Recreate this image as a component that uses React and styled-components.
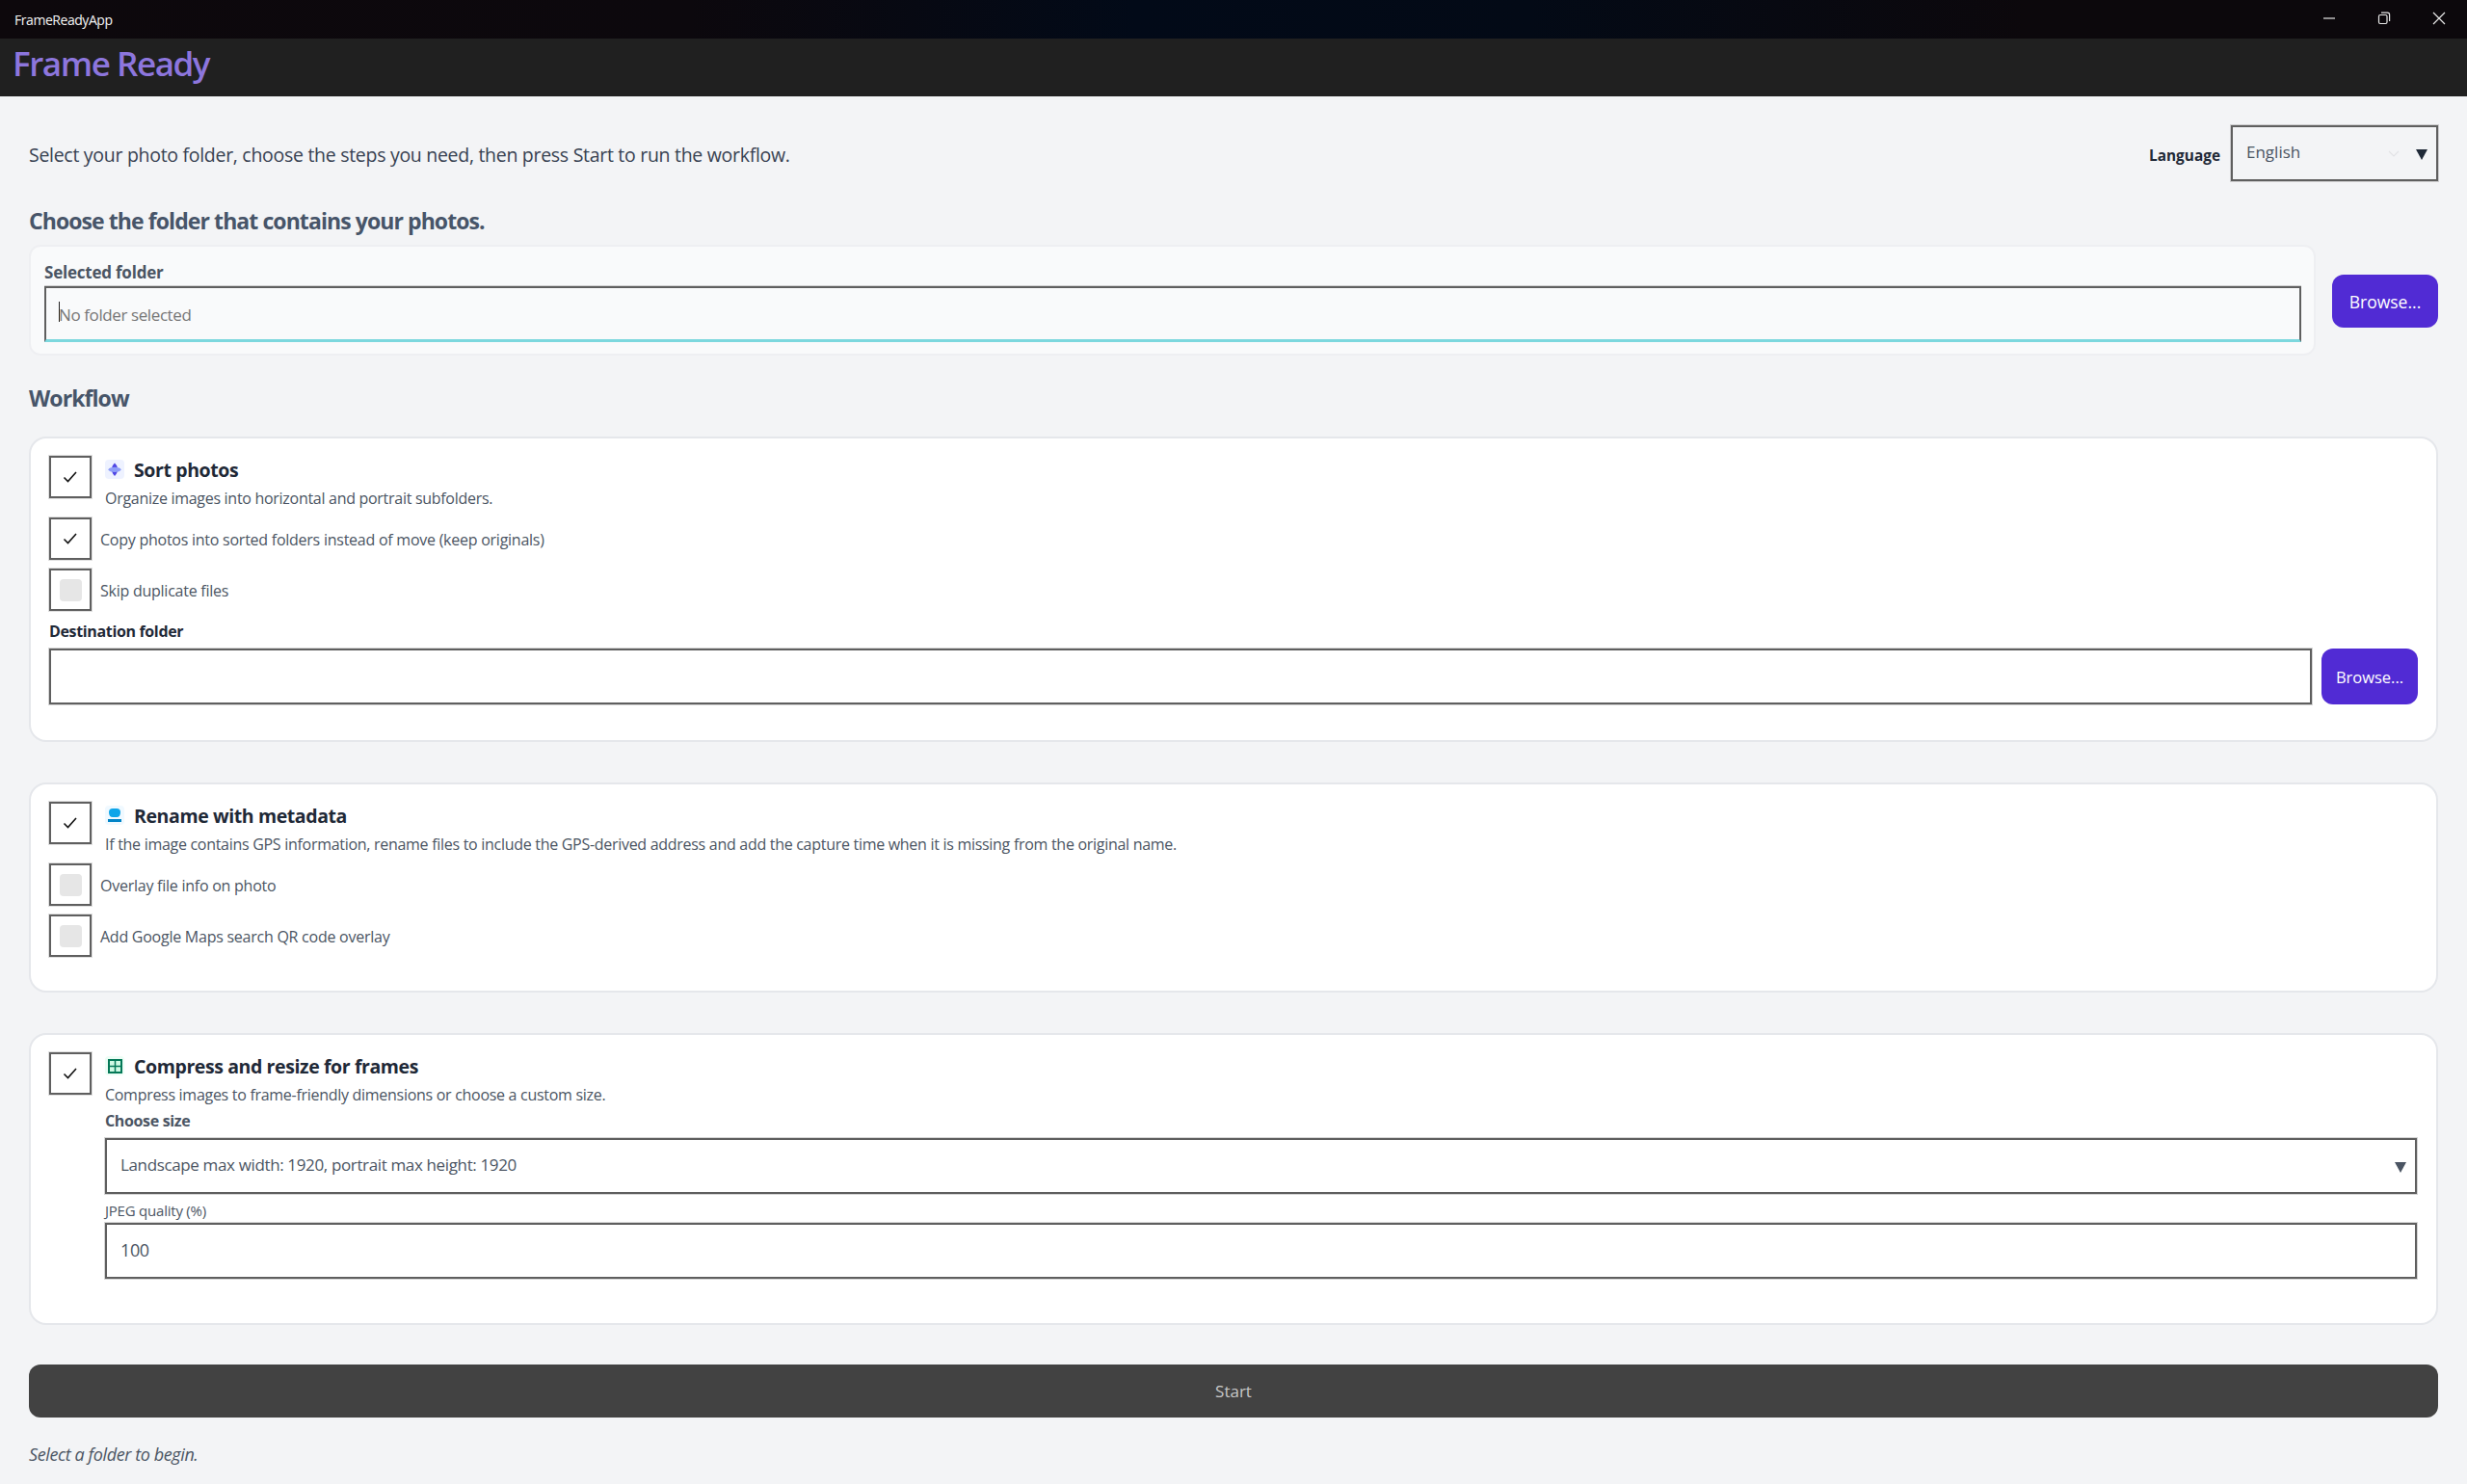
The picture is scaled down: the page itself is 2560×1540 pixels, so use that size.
import styled, { createGlobalStyle } from "styled-components";

const GlobalStyle = createGlobalStyle`
  html, body {
    margin: 0;
    padding: 0;
    background: #f3f4f6;
  }
  * {
    box-sizing: border-box;
  }
`;

const SEGOE = `"Open Sans", "Noto Sans", sans-serif`;

const Page = styled.div`
  width: 2560px;
  height: 1540px;
  display: flex;
  flex-direction: column;
  font-family: ${SEGOE};
  overflow: hidden;
`;

const TitleBar = styled.div`
  height: 40px;
  flex: none;
  display: flex;
  align-items: center;
  justify-content: space-between;
  padding-left: 15px;
  background: linear-gradient(90deg, #0d080c 0%, #0c080d 28%, #020a18 46%, #030a16 62%, #0c080c 82%, #0c080c 100%);
`;

const AppName = styled.span`
  color: #f5f5f5;
  font-size: 14px;
  letter-spacing: -0.45px;
`;

const WindowControls = styled.div`
  display: flex;
  height: 100%;
  align-items: center;
  padding-right: 1px;
`;

const WindowButton = styled.div`
  width: 57px;
  height: 100%;
  display: flex;
  align-items: center;
  justify-content: center;
  margin-top: -2px;
`;

const HeaderBar = styled.header`
  height: 60px;
  flex: none;
  display: flex;
  align-items: center;
  padding: 0 0 9px 13px;
  background: #202020;
`;

const AppTitle = styled.h1`
  margin: 0;
  color: #8d76dd;
  font-size: 35px;
  font-weight: 600;
  letter-spacing: -1.45px;
  line-height: 44px;
`;

const Main = styled.main`
  flex: 1;
  padding: 29px 30px 0;
  display: flex;
  flex-direction: column;
`;

const TopRow = styled.div`
  display: flex;
  align-items: center;
  justify-content: space-between;
  height: 60px;
`;

const Intro = styled.p`
  margin: 3px 0 0;
  color: #374151;
  font-size: 19.5px;
  letter-spacing: -0.29px;
`;

const LanguageGroup = styled.div`
  display: flex;
  align-items: center;
  gap: 11px;
`;

const LanguageLabel = styled.span`
  color: #1f2937;
  font-size: 15.4px;
  font-weight: 700;
  margin-top: 4px;
`;

const Field = styled.div`
  position: relative;
  display: flex;
  align-items: center;
  height: 58px;
  width: ${(p) => p.$width || "100%"};
  padding: 0 0 3px ${(p) => p.$inset || 14}px;
  border: 2px solid #5f5f5f;
  box-shadow: 0 0 0 1px rgba(0, 0, 0, 0.16);
  background: ${(p) => p.$bg || "#ffffff"};
  color: #4b5563;
  font-size: ${(p) => p.$size || 17}px;
  letter-spacing: ${(p) => p.$spacing || "-0.36px"};
`;

const FauxChevron = styled.svg`
  position: absolute;
  right: 38px;
  top: 24px;
`;

const Arrow = styled.span`
  position: absolute;
  right: ${(p) => p.$right || 9}px;
  top: ${(p) => p.$top || 23}px;
  width: 0;
  height: 0;
  border-left: 6px solid transparent;
  border-right: 6px solid transparent;
  border-top: 11px solid ${(p) => p.$color || "#4b5563"};
`;

const SectionHeading = styled.h2`
  margin: ${(p) => p.$top}px 0 ${(p) => p.$bottom}px;
  color: #475569;
  font-size: 23px;
  font-weight: 700;
  letter-spacing: -0.92px;
  line-height: 32px;
`;

const FolderRow = styled.div`
  display: flex;
  align-items: center;
  gap: 17px;
`;

const FolderCard = styled.section`
  flex: 1;
  height: 115px;
  padding: 15px 13px 13px 14px;
  border: 2px solid #eeeff2;
  border-radius: 12px;
  background: #f9fafb;
`;

const FolderLabel = styled.div`
  color: #4b5563;
  font-size: 17px;
  font-weight: 700;
  letter-spacing: -0.22px;
  line-height: 24px;
  margin-bottom: 2px;
`;

const FolderInput = styled(Field)`
  height: 58px;
  padding: 1px 0 0 13px;
  border-bottom: 3px solid #7dd8de;
  box-shadow: 0 -1px 0 0 rgba(0, 0, 0, 0.16);
  background: #f9fafb;
  color: #767676;
  letter-spacing: -0.4px;
  font-size: 17px;
`;

const Caret = styled.span`
  position: absolute;
  left: 13px;
  top: 14px;
  width: 1px;
  height: 21px;
  background: #222222;
`;

const BrowseButton = styled.button`
  flex: none;
  width: ${(p) => p.$width}px;
  height: ${(p) => p.$height}px;
  margin-top: ${(p) => p.$offset || 0}px;
  border: none;
  border-radius: 12px;
  padding: 0;
  background: #512bd4;
  color: #ffffff;
  font-family: "Open Sans", sans-serif;
  font-size: ${(p) => p.$size}px;
`;

const StepCard = styled.section`
  margin-bottom: 42px;
  padding: 18px 19px ${(p) => p.$bottom}px 19px;
  border: 2px solid #e5e7eb;
  border-radius: 18px;
  background: #ffffff;
`;

const StepHead = styled.div`
  display: grid;
  grid-template-columns: 44px 1fr;
  column-gap: 14px;
`;

const StepBody = styled.div`
  padding: 4px 1px 0 0;
  min-width: 0;
`;

const StepTitleRow = styled.div`
  display: flex;
  align-items: center;
  gap: 10px;
  height: 20px;
`;

const IconTile = styled.span`
  width: 20px;
  height: 20px;
  flex: none;
  display: block;
  border-radius: 4px;
  background: ${(p) => p.$bg};
`;

const StepTitle = styled.h3`
  margin: 1px 0 0;
  color: #1f2937;
  font-size: 19.5px;
  font-weight: 700;
  letter-spacing: -0.4px;
`;

const StepDesc = styled.p`
  margin: 9px 0 0;
  color: #4b5563;
  font-size: 16px;
  letter-spacing: -0.29px;
  line-height: 22px;
`;

const OptionList = styled.div`
  display: flex;
  flex-direction: column;
  gap: 9px;
  margin-top: 9px;
`;

const OptionRow = styled.label`
  display: flex;
  align-items: center;
  gap: 9px;
`;

const OptionText = styled.span`
  color: #4b5563;
  font-size: 16px;
  letter-spacing: -0.25px;
  margin-top: 2px;
`;

const CheckFrame = styled.span`
  width: 44px;
  height: 44px;
  flex: none;
  display: flex;
  align-items: center;
  justify-content: center;
  border: 2px solid #5f5f5f;
  box-shadow: 0 0 0 1px rgba(0, 0, 0, 0.12);
  background: #ffffff;
`;

const EmptyMark = styled.span`
  width: 23px;
  height: 23px;
  border-radius: 4px;
  background: #e6e6e6;
`;

const FieldLabel = styled.div`
  margin: ${(p) => p.$top}px 0 ${(p) => p.$bottom}px;
  color: ${(p) => p.$color};
  font-size: 16px;
  font-weight: 700;
  letter-spacing: -0.35px;
  line-height: 22px;
`;

const SmallLabel = styled.div`
  margin: 7px 0 3px;
  color: #4b5563;
  font-size: 15px;
  letter-spacing: -0.22px;
  line-height: 20px;
`;

const DestinationRow = styled.div`
  display: flex;
  gap: 10px;
`;

const StartButton = styled.button`
  flex: none;
  height: 55px;
  margin-top: -1px;
  border: none;
  border-radius: 12px;
  background: #424242;
  color: #c8c8c8;
  font-family: "Open Sans", sans-serif;
  font-size: 17px;
`;

const StatusText = styled.p`
  margin: 26px 0 0;
  color: #4b5563;
  font-size: 18px;
  font-style: italic;
  letter-spacing: -0.4px;
  line-height: 24px;
`;

const CheckBox = ({ checked }) => (
  <CheckFrame>
    {checked ? (
      <svg width="16" height="14" viewBox="0 0 16 14" fill="none">
        <path d="M1.5 7.5 L5.5 11.5 L14 2" stroke="#111111" strokeWidth="1.6" />
      </svg>
    ) : (
      <EmptyMark />
    )}
  </CheckFrame>
);

const SortGlyph = () => (
  <IconTile $bg="#eef2ff">
    <svg width="20" height="20" viewBox="0 0 20 20">
      <path d="M10 3.5 Q11.8 5 13 8.5 H7 Q8.2 5 10 3.5 Z" fill="#4f46e5" />
      <path d="M10 17 Q11.8 15.5 13 12 H7 Q8.2 15.5 10 17 Z" fill="#4f46e5" />
      <ellipse cx="10" cy="10.3" rx="6.5" ry="2.6" fill="#8e9df8" />
    </svg>
  </IconTile>
);

const RenameGlyph = () => (
  <IconTile $bg="#f0f9ff">
    <svg width="20" height="20" viewBox="0 0 20 20">
      <path d="M4 7 Q4 3 8 3 H12 Q16 3 16 7 Q16 12 12 12 H8 Q4 12 4 7 Z" fill="#0ea5e9" />
      <rect x="3" y="14" width="14" height="3" fill="#0284c7" />
    </svg>
  </IconTile>
);

const FrameGlyph = () => (
  <IconTile $bg="#ecfdf5">
    <svg width="20" height="20" viewBox="0 0 20 20" fill="none">
      <rect x="4" y="4" width="13" height="13" fill="#d1fae5" stroke="#047857" strokeWidth="2" />
      <path d="M10.5 4 V17 M4 10.5 H17" stroke="#047857" strokeWidth="1.5" />
    </svg>
  </IconTile>
);

const App = () => (
  <Page>
    <GlobalStyle />
    <TitleBar>
      <AppName>FrameReadyApp</AppName>
      <WindowControls>
        <WindowButton>
          <svg width="14" height="14" viewBox="0 0 14 14">
            <path d="M1 7 H13" stroke="#e8e8e8" strokeWidth="1.2" />
          </svg>
        </WindowButton>
        <WindowButton>
          <svg width="14" height="14" viewBox="0 0 14 14" fill="none">
            <rect x="1.5" y="3.5" width="8.5" height="9" rx="1.5" stroke="#e8e8e8" strokeWidth="1.2" />
            <path d="M4 1.2 H10.5 Q12.6 1.2 12.6 3.3 V10" stroke="#e8e8e8" strokeWidth="1.2" />
          </svg>
        </WindowButton>
        <WindowButton>
          <svg width="14" height="14" viewBox="0 0 14 14">
            <path d="M1 1 L13 13 M13 1 L1 13" stroke="#e8e8e8" strokeWidth="1.2" />
          </svg>
        </WindowButton>
      </WindowControls>
    </TitleBar>
    <HeaderBar>
      <AppTitle>Frame Ready</AppTitle>
    </HeaderBar>
    <Main>
      <TopRow>
        <Intro>Select your photo folder, choose the steps you need, then press Start to run the workflow.</Intro>
        <LanguageGroup>
          <LanguageLabel>Language</LanguageLabel>
          <Field $width="215px" $bg="#f3f4f6" $size={17} $spacing="0" $inset={14}>
            English
            <FauxChevron width="12" height="8" viewBox="0 0 12 8" fill="none">
              <path d="M1 1 L6 6 L11 1" stroke="#e2e3e6" strokeWidth="1.2" />
            </FauxChevron>
            <Arrow $color="#1f2937" />
          </Field>
        </LanguageGroup>
      </TopRow>

      <SectionHeading $top={24} $bottom={9}>Choose the folder that contains your photos.</SectionHeading>
      <FolderRow>
        <FolderCard>
          <FolderLabel>Selected folder</FolderLabel>
          <FolderInput>
            <Caret />
            No folder selected
          </FolderInput>
        </FolderCard>
        <BrowseButton $width={110} $height={55} $size={17.5} $offset={2}>Browse...</BrowseButton>
      </FolderRow>

      <SectionHeading $top={28} $bottom={24}>Workflow</SectionHeading>

      <StepCard $bottom={37}>
        <StepHead>
          <CheckBox checked />
          <StepBody>
            <StepTitleRow>
              <SortGlyph />
              <StepTitle>Sort photos</StepTitle>
            </StepTitleRow>
            <StepDesc>Organize images into horizontal and portrait subfolders.</StepDesc>
          </StepBody>
        </StepHead>
        <OptionList>
          <OptionRow>
            <CheckBox checked />
            <OptionText>Copy photos into sorted folders instead of move (keep originals)</OptionText>
          </OptionRow>
          <OptionRow>
            <CheckBox />
            <OptionText>Skip duplicate files</OptionText>
          </OptionRow>
        </OptionList>
        <FieldLabel $top={10} $bottom={7} $color="#1f2937">Destination folder</FieldLabel>
        <DestinationRow>
          <Field />
          <BrowseButton $width={100} $height={58} $size={16.5}>Browse...</BrowseButton>
        </DestinationRow>
      </StepCard>

      <StepCard $bottom={35}>
        <StepHead>
          <CheckBox checked />
          <StepBody>
            <StepTitleRow>
              <RenameGlyph />
              <StepTitle>Rename with metadata</StepTitle>
            </StepTitleRow>
            <StepDesc>If the image contains GPS information, rename files to include the GPS-derived address and add the capture time when it is missing from the original name.</StepDesc>
          </StepBody>
        </StepHead>
        <OptionList>
          <OptionRow>
            <CheckBox />
            <OptionText>Overlay file info on photo</OptionText>
          </OptionRow>
          <OptionRow>
            <CheckBox />
            <OptionText>Add Google Maps search QR code overlay</OptionText>
          </OptionRow>
        </OptionList>
      </StepCard>

      <StepCard $bottom={46}>
        <StepHead>
          <CheckBox checked />
          <StepBody>
            <StepTitleRow>
              <FrameGlyph />
              <StepTitle>Compress and resize for frames</StepTitle>
            </StepTitleRow>
            <StepDesc>Compress images to frame-friendly dimensions or choose a custom size.</StepDesc>
            <FieldLabel $top={5} $bottom={7} $color="#4b5563">Choose size</FieldLabel>
            <Field>
              Landscape max width: 1920, portrait max height: 1920
              <Arrow />
            </Field>
            <SmallLabel>JPEG quality (%)</SmallLabel>
            <Field $size={18}>100</Field>
          </StepBody>
        </StepHead>
      </StepCard>

      <StartButton>Start</StartButton>
      <StatusText>Select a folder to begin.</StatusText>
    </Main>
  </Page>
);

export default App;
